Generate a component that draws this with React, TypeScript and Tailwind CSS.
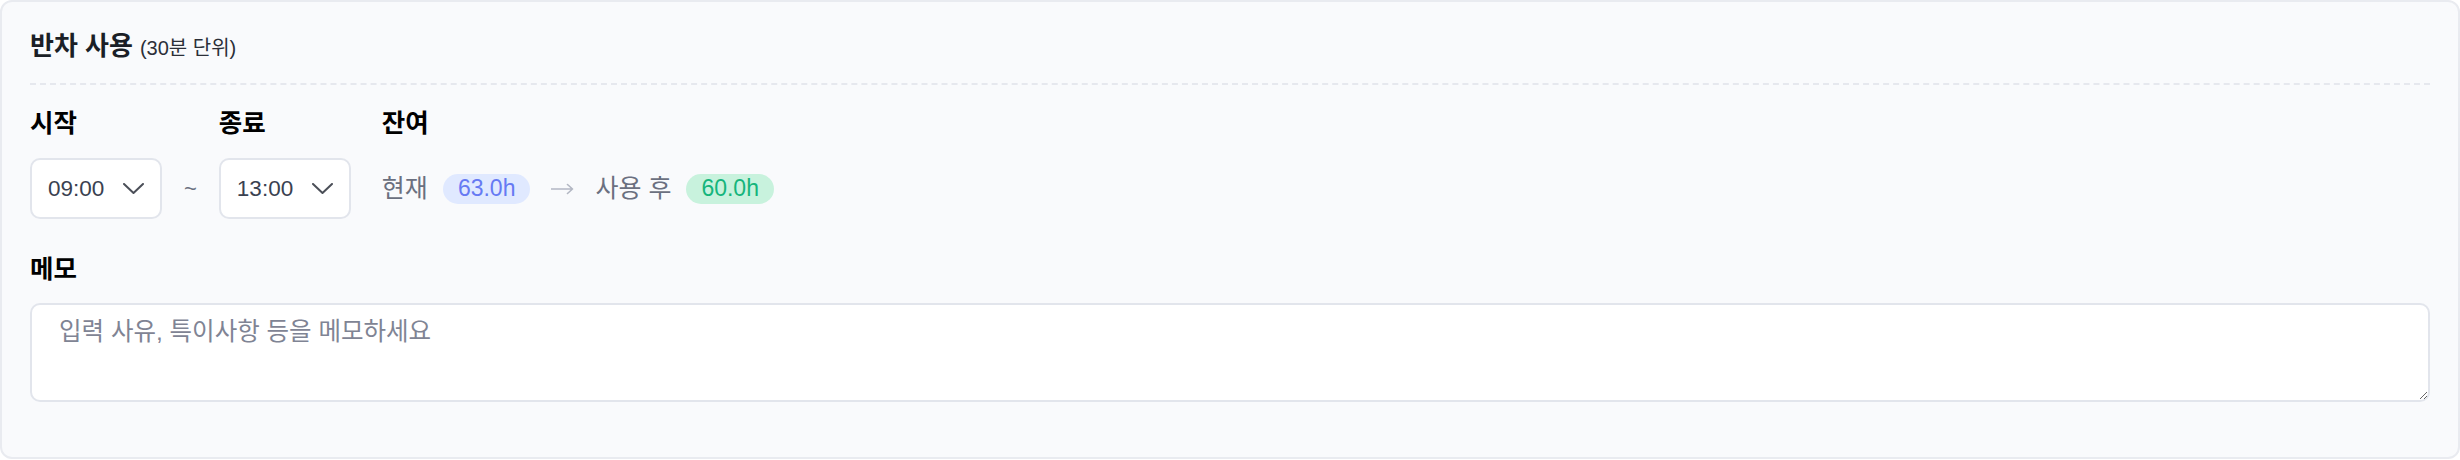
import { useState } from 'react';

const FONT = 'font-["Liberation_Sans","Noto_Sans_CJK_KR",sans-serif]';

function Chevron() {
  return (
    <svg width="21" height="11" viewBox="0 0 21 11" fill="none" className="shrink-0">
      <path d="M1 1l9.5 9 9.5-9" stroke="#4b4f58" strokeWidth="2" strokeLinecap="round" strokeLinejoin="round" />
    </svg>
  );
}

function Arrow() {
  return (
    <svg width="23" height="12" viewBox="0 0 23 12" fill="none" className="shrink-0">
      <path d="M0.5 6h21M16.5 1.5l5 4.5-5 4.5" stroke="#b3b7c3" strokeWidth="1.6" strokeLinecap="round" strokeLinejoin="round" />
    </svg>
  );
}

function TimeSelect({ value }: { value: string }) {
  return (
    <div className="flex items-center justify-between w-[132px] h-[61px] pl-[16px] pr-[16px] bg-white border-2 border-[#e2e5ec] rounded-[10px]">
      <span className="text-[22.5px] text-[#3a4150]">{value}</span>
      <Chevron />
    </div>
  );
}

export default function App() {
  const [memo, setMemo] = useState('');

  return (
    <div className={`${FONT} w-full h-[460px] bg-white`}>
      <div className="h-[459px] w-full bg-[#f9fafc] border-2 border-[#e9ebf0] rounded-[12px] px-[28px] pt-[28px]">
        <div className="flex items-baseline pb-[20px] border-b-2 border-dashed border-[#e6e8ee]">
          <span className="text-[26px] leading-[32px] font-bold text-[#1b1f27]">반차 사용</span>
          <span className="ml-[7px] text-[20px] text-[#2b2f38]">(30분 단위)</span>
        </div>

        <div className="flex items-end gap-[22px] pt-[22px]">
          <div className="flex flex-col gap-[19px]">
            <span className="text-[25.5px] leading-[32px] font-bold text-black">시작</span>
            <TimeSelect value="09:00" />
          </div>
          <span className="h-[61px] flex items-center text-[22px] text-[#6b7080]">~</span>
          <div className="flex flex-col gap-[19px]">
            <span className="text-[25.5px] leading-[32px] font-bold text-black">종료</span>
            <TimeSelect value="13:00" />
          </div>
          <div className="ml-[9px] flex flex-col gap-[19px]">
            <span className="text-[25.5px] leading-[32px] font-bold text-black">잔여</span>
            <div className="h-[61px] flex items-center">
              <span className="text-[25px] text-[#6b7080]">현재</span>
              <span className="ml-[15px] h-[30px] px-[15px] flex items-center rounded-full bg-[#e0e9ff] text-[23px] text-[#667af3]">63.0h</span>
              <span className="ml-[21px]"><Arrow /></span>
              <span className="ml-[21px] text-[25px] text-[#6b7080]">사용 후</span>
              <span className="ml-[15px] h-[30px] px-[15px] flex items-center rounded-full bg-[#c8f2dd] text-[23px] text-[#15b57c]">60.0h</span>
            </div>
          </div>
        </div>

        <div className="pt-[34px] flex flex-col gap-[18px]">
          <span className="text-[25.5px] leading-[32px] font-bold text-black">메모</span>
          <textarea
            value={memo}
            onChange={e => setMemo(e.target.value)}
            placeholder="입력 사유, 특이사항 등을 메모하세요"
            className="h-[99px] w-full bg-white border-2 border-[#e2e5ec] rounded-[10px] px-[27px] py-[10px] text-[24.5px] leading-[34px] text-[#3a4150] placeholder:text-[#7f8494] outline-none"
          />
        </div>
      </div>
    </div>
  );
}
